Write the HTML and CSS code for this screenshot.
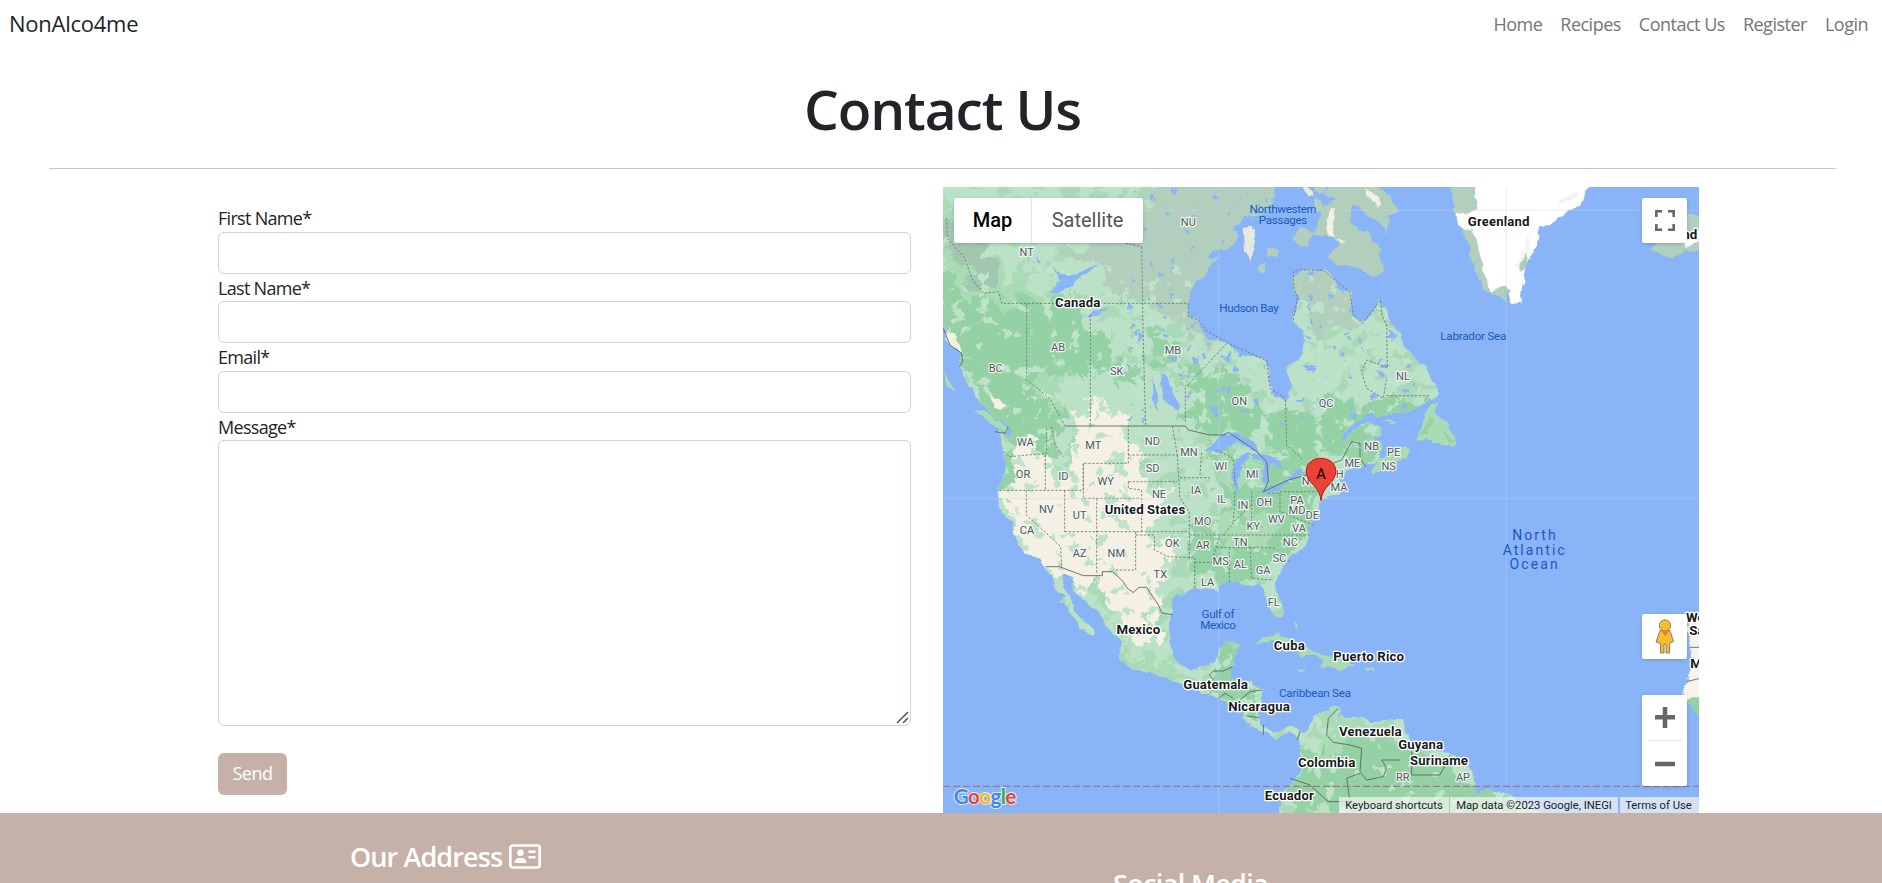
FILE: index.html
```html
<!DOCTYPE html>
<html lang="en">
<head>
<meta charset="utf-8">
<title>Contact Us</title>
<link rel="stylesheet" href="styles.css">
</head>
<body>
<nav class="navbar">
  <a class="brand">NonAlco4me</a>
  <ul class="nav-links"><li>Home</li><li>Recipes</li><li>Contact Us</li><li>Register</li><li>Login</li></ul>
</nav>
<header class="page-head"><h1>Contact Us</h1></header>
<main class="contact">
  <form class="form">
    <label>First Name*</label><input type="text" class="control">
    <label>Last Name*</label><input type="text" class="control">
    <label>Email*</label><input type="text" class="control">
    <label>Message*</label>
    <div class="message-wrap"><textarea class="control message"></textarea>
      <svg class="grip" width="13" height="13" viewBox="0 0 13 13"><path d="M1 12L12 1M7 12L12 7" stroke="#555" stroke-width="1.500"/></svg>
    </div>
    <button type="button" class="send">Send</button>
  </form>
  <section class="map">
    <svg class="tiles" viewBox="9 6 2268 1878" width="756" height="626">
      <defs>
        <filter id="coast" x="0" y="0" width="100%" height="100%" color-interpolation-filters="sRGB">
          <feTurbulence type="fractalNoise" baseFrequency=".02" numOctaves="4" seed="4" result="n"/>
          <feDisplacementMap in="SourceGraphic" in2="n" scale="30" xChannelSelector="R" yChannelSelector="G"/>
        </filter>
        <filter id="rough" x="-10%" y="-10%" width="120%" height="120%" color-interpolation-filters="sRGB">
          <feTurbulence type="fractalNoise" baseFrequency=".018" numOctaves="4" seed="9" result="n"/>
          <feDisplacementMap in="SourceGraphic" in2="n" scale="130" xChannelSelector="R" yChannelSelector="G"/>
        </filter>
        <filter id="speckGreen" x="0" y="0" width="100%" height="100%" color-interpolation-filters="sRGB">
          <feTurbulence type="fractalNoise" baseFrequency=".016 .022" numOctaves="4" seed="21"/>
          <feColorMatrix values="0 0 0 0 .64  0 0 0 0 .84  0 0 0 0 .70  22 0 0 0 -12.4"/>
        </filter>
        <filter id="speckPale" x="0" y="0" width="100%" height="100%" color-interpolation-filters="sRGB">
          <feTurbulence type="fractalNoise" baseFrequency=".026" numOctaves="3" seed="33"/>
          <feColorMatrix values="0 0 0 0 .75  0 0 0 0 .89  0 0 0 0 .79  24 0 0 0 -15.4"/>
        </filter>
        <filter id="speckWater" x="0" y="0" width="100%" height="100%" color-interpolation-filters="sRGB">
          <feTurbulence type="fractalNoise" baseFrequency=".032" numOctaves="3" seed="12"/>
          <feColorMatrix values="0 0 0 0 .54  0 0 0 0 .71  0 0 0 0 .97  30 0 0 0 -21.2"/>
        </filter>
        <path id="continent" d="M-30-30V430L9 430 30 480 70 500 60 540 85 590 110 640 150 680 200 725 215 760 180 740 187 800 200 830 180 910 178 945 190 990 215 1010 225 1060 250 1100 300 1120 318 1145 335 1175 345 1210 375 1240 358 1250 385 1275 410 1305 415 1335 440 1345 460 1352 458 1335 430 1310 405 1270 385 1235 362 1190 362 1165 393 1175 400 1215 430 1240 470 1275 510 1330 540 1370 545 1420 575 1450 650 1475 720 1500 800 1525 850 1545 880 1555 915 1600 920 1615 970 1640 1010 1665 1030 1645 1065 1645 1085 1670 1080 1720 1085 1760 1050 1800 1030 1830 1010 1910H1850L1770 1860 1690 1830 1640 1818 1600 1830 1605 1795 1600 1775 1575 1725 1525 1700 1440 1695 1410 1670 1385 1605 1280 1605 1200 1585 1190 1600 1180 1620 1195 1570 1160 1575 1115 1605 1085 1645 1065 1625 1030 1630 1000 1640 970 1625 955 1600 960 1540 965 1515 930 1490 870 1480 870 1450 885 1430 895 1385 870 1380 835 1390 825 1435 790 1445 750 1455 725 1440 700 1400 685 1370 688 1290 695 1250 740 1215 770 1205 830 1215 845 1195 900 1190 930 1205 960 1195 975 1225 985 1270 1010 1305 1025 1300 1025 1260 1003 1190 1020 1155 1060 1105 1105 1080 1110 1040 1095 1025 1115 1020 1140 985 1145 945 1200 930 1215 905 1200 880 1220 860 1275 835 1320 820 1325 770 1290 755 1325 745 1325 720 1290 715 1240 735 1205 780 1195 785 1215 745 1250 710 1290 690 1400 688 1440 660 1480 645 1490 640 1492 600 1470 575 1460 545 1425 520 1400 490 1380 460 1365 430 1345 400 1330 370 1320 345 1310 370 1290 400 1265 415 1240 390 1230 350 1230 320 1190 305 1180 280 1150 256 1075 256 1060 275 1062 320 1075 340 1072 370 1060 405 1090 440 1092 480 1075 525 1035 545 1055 600 1050 640 1030 655 1000 625 988 600 985 540 975 525 900 510 860 475 800 460 785 435 775 405 745 395 745 350 760 300 800 260 830 225 810 215 820 195 870 190 895 150 880 120 915 100 960 90 1000 50 1005-30Z"/>
        <clipPath id="landClip"><use href="#continent"/></clipPath>
      </defs>
      <rect width="2400" height="2000" fill="#8ab4f8"/>
      <g filter="url(#coast)">
        <use href="#continent" fill="#bbe2c6"/>
        <g clip-path="url(#landClip)">
          <rect width="1700" height="1884" filter="url(#speckGreen)" opacity=".75"/>
          <g filter="url(#rough)">
            <path fill="#b2cfbe" d="M340 190L520 170 600 110 640-40H1060V480H820L780 450 690 400 620 350 500 340 480 250ZM1040 240H1240V400L1180 430 1100 440Z"/>
            <path fill="#bbe2c6" d="M380 565L470 560 600 610 720 640 730 720 640 800 400 720 350 640Z"/>
            <path fill="#94d2a5" d="M-20 250L90 300 210 350 400 345 450 400 520 500 600 540 590 610 540 575 380 560 350 600 380 700 330 760 340 820 220 780 180 700 0 450ZM740 540L860 560 960 680 1120 690 1180 650 1300 660 1480 640 1480 700 1240 740 1150 830 1060 830 930 750 800 750 730 700ZM190 800L230 810 230 880 180 980ZM590 450H700L740 540 680 560Z"/>
            <path fill="#a9dbb5" d="M9 10L60 50 130 190 200 250 330 340 150 380 9 260ZM250 580L380 560 350 700Z"/>
            <path fill="#a0bfae" d="M9 130L60 150 160 210 190 300 130 310 90 260 9 200Z" opacity=".7"/>
            <path fill="#f5f0e4" d="M400 700L480 650 540 690 590 800 600 880 690 920 660 990 610 1030 670 1080 690 1150 620 1290 660 1370 620 1390 530 1290 440 1200 340 1170 230 1060 210 960 225 820 270 740 320 830 390 860 410 800Z"/>
            <path fill="#bbe2c6" d="M490 900L540 950 540 1040 500 990ZM345 840L390 850 370 910 340 880ZM440 1100L480 1130 460 1160ZM470 840L540 830 560 870 500 860Z"/>
            <path fill="#94d2a5" d="M800 770L930 820 1100 820 1140 960 1110 1060 1020 1120 980 1190 800 1190 750 1150 770 1000 850 950ZM830 1390H900L880 1470 960 1510 950 1600 890 1550 800 1500ZM1060 1700L1180 1680 1320 1640 1500 1700 1610 1800 1760 1884H1040ZM1190 700L1320 720 1310 820 1200 860Z"/>
            <path fill="#a9dbb5" d="M850 830H970V910H850ZM840 980L1030 1000 960 1080 840 1110ZM1130 1600L1210 1580 1200 1700 1130 1740ZM320 1230L420 1290 410 1320ZM440 1190L510 1230 570 1400 700 1440 650 1470 540 1380Z"/>
          </g>
          <rect x="0" y="240" width="1700" height="1644" filter="url(#speckPale)"/>
          <rect x="560" width="950" height="720" filter="url(#speckWater)"/>
        </g>
        <g fill="#b2cfbe">
          <path d="M1165-20H1290L1380 70 1350 90 1340 145 1310 110 1270 80 1240 60 1230 100 1260 130 1290 150 1325 195 1325 260 1290 280 1240 240 1190 240 1165 210 1195 190 1180 160 1120 145 1140 90 1130 60 1160 20ZM1070 130L1120 140 1110 185 1060 170ZM980 190L1015 200 1010 215 985 208ZM955 240L985 238 975 265 955 262Z"/>
          <path d="M910 130L935 125 945 160 935 230 915 200ZM1080-10L1120 20 1100 40Z" fill="#e6eadd"/>
          <path d="M1120-10H1160L1145 60 1125 90Z"/>
          <path d="M1535-10H1620L1690 330 1700 355 1660 325 1630 320 1600 240 1590 180 1565 130 1540 80Z"/>
          <path d="M2120 110L2250 80 2290 100V185L2200 218 2130 195 2150 170Z"/>
        </g>
        <path fill="#fff" d="M1610-10H1958L1920 50 1840 110 1800 125 1790 180 1760 240 1750 300 1745 355 1715 350 1685 310 1650 320 1625 250 1607 180 1597 130 1555 120 1550 90 1615 80Z"/>
        <path fill="#f1f3f4" d="M1725 240L1770 150 1775 200 1745 250ZM1850 60L1920 15 1900 45Z"/>
        <path fill="#a9cdb6" d="M1738 240L1762 200 1766 235 1745 262ZM1675 318L1695 305 1706 318 1700 330Z"/>
        <path fill="#fff" d="M2215 165L2290 130V160L2240 195Z"/>
        <path fill="#f5f0e4" d="M1175 60L1190 95 1180 160 1155 145ZM1190 165L1215 175 1195 180ZM1265 10L1310 30 1315 60 1280 35ZM150 630L180 640 200 670 165 670ZM300 610L340 640 320 640ZM10 440L50 450 75 500 30 480Z"/>
        <g fill="#a9dbb5">
          <path d="M1425 760L1445 720 1470 660 1495 648 1485 690 1530 710 1550 770 1540 790 1500 770 1430 762ZM1295 860L1310 820 1355 810 1400 785 1410 800 1350 850 1305 872ZM1330 698L1375 718 1350 716ZM100 670L150 685 205 740 180 740 130 705ZM9 560L30 590 45 625 20 610Z"/>
          <path d="M940 1375L965 1355 1010 1350 1050 1365 1100 1385 1140 1410 1080 1415 1060 1390 1000 1366ZM1065 1447L1100 1450 1085 1458ZM1110 1395L1150 1415 1250 1440 1195 1455 1140 1447 1150 1430ZM1272 1448H1302V1457H1272ZM1060 1310L1072 1325 1070 1335Z"/>
        </g>
        <path fill="#94d2a5" d="M1440 745L1470 700 1480 715 1455 752ZM1520 735L1545 770 1530 775Z"/>
        <path fill="#f8f3eb" d="M2300 1270L2255 1300 2245 1360 2255 1420 2250 1480 2235 1510 2240 1545H2300Z"/>
        <path fill="#94d2a5" d="M2240 1543H2300V1605L2260 1575Z"/>
        <g fill="#8ab4f8">
          <path d="M338 248L370 272 405 275 435 250 470 245 430 270 400 300 350 318 320 315 365 290ZM440 400L460 370 500 380 465 390ZM660 570L685 585 710 640 715 680 700 680 670 640ZM632 585L650 620 655 680 635 640ZM595 440L610 450 600 480ZM575 410L590 425 578 430ZM288 208L312 228 300 232Z"/>
          <path d="M790 795L850 745 890 742 930 765 965 805 930 800 895 775 840 800ZM890 920L880 860 900 815 935 808 905 840ZM925 815L975 805 1020 830 1025 850 990 840 985 895 965 880 970 835ZM965 920L1045 880 1045 895 990 925ZM1040 870L1090 858 1100 870 1050 885Z"/>
          <path d="M200 725L215 735 210 760ZM1100 540L1130 550 1120 570ZM1310 560L1345 570 1320 575ZM1130 640L1150 645 1140 665ZM1100 6L1190 50 1150 60Z"/>
        </g>
      </g>
      <g class="borders">
        <path d="M20 100L22 160 75 220 95 280 130 325 175 320 185 355H745M260 355V585L330 640 375 723M451 390V723M605 185L610 480 617 723M545 172L605 185M736 710V608L860 475M745 355V395L775 405 800 437 860 472 980 527 990 610 1036 640 1040 780 1090 825M1060 405L1072 340 1060 300V262L1075 254 1150 256 1230 322 1240 390 1267 415 1322 345 1325 390 1340 420 1342 548 1280 525 1265 560 1280 610 1330 640 1340 577M1340 632H1470M190 800L210 815 320 805V725M335 725L345 780 370 815M316 810V916M178 916H430V835H565V723M565 810H712L697 723M565 890H712M430 835V940H600M565 890V910L605 915V1040M259 916V990L362 1085 365 1145M374 916V1040M374 1040H748M470 940V1165M587 1040V1155H520M587 1050H643V1095L685 1115 760 1118M712 810L720 940 748 980V1120M720 878H810M780 870L785 800M748 1050H850L890 1000 935 960M764 1118V1210M764 1132H815L840 1048M868 1088V1195M830 1088H1000M930 1088L935 1180 1000 1185M850 1050H1110M935 920V1020M885 920L880 1010M830 795L880 820 885 900M985 925H1020V980L1120 1020M1020 920H1130M1000 1088L1050 1130"/>
        <path class="national" d="M10 430L30 480 65 505 68 530 58 545M165 740L195 745 205 725M375 723H736L745 735 810 750 850 750 865 742 915 775 950 800 980 830 985 890 970 920 1045 885 1100 870M1178 835L1205 825 1235 770 1260 775V820L1278 845M318 1145L358 1145 430 1172H487V1160H518L550 1190 560 1208 580 1223 597 1207H620L655 1260 665 1283 698 1290M878 1445L850 1458H820L808 1470 835 1500M835 1540L855 1525 880 1540M965 1515L930 1520 900 1545M920 1593L955 1598M970 1620V1650M1080 1640L1072 1665M1195 1570L1165 1600 1160 1650 1180 1672 1230 1680 1265 1690 1260 1760 1280 1785 1330 1775 1340 1750 1325 1725 1380 1725M1260 1765L1220 1780 1230 1850 1165 1850 1110 1800 1050 1780M1415 1700V1770H1500L1530 1710M2250 1387H2280M2240 1490L2280 1480"/>
      </g>
      <path class="grid" d="M836 6V1884M1699 6V1884M9 76H2277M9 941H2277"/>
      <path class="equator" d="M9 1804H2277"/>
      <g class="state">
        <text x="745" y="123">NU</text><text x="260" y="213">NT</text><text x="354" y="499">AB</text><text x="167" y="560">BC</text><text x="530" y="570">SK</text><text x="699" y="507">MB</text><text x="898" y="659">ON</text><text x="1158" y="666">QC</text><text x="1389" y="584">NL</text><text x="256" y="784">WA</text><text x="460" y="793">MT</text><text x="637" y="780">ND</text><text x="747" y="814">MN</text><text x="638" y="860">SD</text><text x="843" y="855">WI</text><text x="937" y="880">MI</text><text x="249" y="880">OR</text><text x="370" y="886">ID</text><text x="497" y="900">WY</text><text x="657" y="939">NE</text><text x="768" y="928">IA</text><text x="845" y="954">IL</text><text x="909" y="973">IN</text><text x="973" y="963">OH</text><text x="1071" y="956">PA</text><text x="1107" y="901">NY</text><text x="1187" y="880">NH</text><text x="1197" y="918">MA</text><text x="1237" y="846">ME</text><text x="1295" y="794">NB</text><text x="1361" y="814">PE</text><text x="1346" y="854">NS</text><text x="319" y="983">NV</text><text x="419" y="1001">UT</text><text x="261" y="1046">CA</text><text x="419" y="1115">AZ</text><text x="529" y="1115">NM</text><text x="661" y="1179">TX</text><text x="697" y="1086">OK</text><text x="788" y="1020">MO</text><text x="788" y="1091">AR</text><text x="803" y="1204">LA</text><text x="842" y="1139">MS</text><text x="901" y="1150">AL</text><text x="969" y="1167">GA</text><text x="1019" y="1131">SC</text><text x="1051" y="1084">NC</text><text x="901" y="1082">TN</text><text x="940" y="1034">KY</text><text x="1009" y="1015">WV</text><text x="1077" y="1042">VA</text><text x="1071" y="986">MD</text><text x="1117" y="1001">DE</text><text x="1001" y="1262">FL</text><text x="1388" y="1787">RR</text><text x="1569" y="1788">AP</text>
      </g>
      <g class="country">
        <text x="413" y="366" textLength="136">Canada</text><text x="1676" y="123" textLength="185">Greenland</text><text x="2272" y="163" class="end">nd</text><text x="615" y="986" textLength="242">United States</text><text x="595" y="1346" textLength="131">Mexico</text><text x="1048" y="1395" textLength="93">Cuba</text><text x="1286" y="1428" textLength="212">Puerto Rico</text><text x="827" y="1511" textLength="194">Guatemala</text><text x="957" y="1579" textLength="185">Nicaragua</text><text x="1291" y="1653" textLength="188">Venezuela</text><text x="1442" y="1693" textLength="135">Guyana</text><text x="1497" y="1740" textLength="174">Suriname</text><text x="1160" y="1746" textLength="172">Colombia</text><text x="1048" y="1845" textLength="147">Ecuador</text><text x="2238" y="1310" class="start">We</text><text x="2248" y="1350" class="start">Sa</text><text x="2251" y="1449" class="start">M</text>
      </g>
      <g class="water">
        <text x="1029" y="83" textLength="201">Northwestern</text><text x="1029" y="116" textLength="146">Passages</text><text x="927" y="380" textLength="178">Hudson Bay</text><text x="1600" y="466" textLength="198">Labrador Sea</text><text x="834" y="1299" textLength="99">Gulf of</text><text x="834" y="1332" textLength="107">Mexico</text><text x="1125" y="1536" textLength="216">Caribbean Sea</text>
        <g class="ocean"><text x="1782" y="1065" textLength="130">North</text><text x="1781" y="1109" textLength="186">Atlantic</text><text x="1781" y="1152" textLength="145">Ocean</text></g>
      </g>
      <path d="M1143 946C1139 915 1125 907 1110 889 1085 856 1104 820 1143 820S1201 856 1176 889C1161 907 1147 915 1143 946Z" fill="#ea4335" stroke="#b31412" stroke-width="3"/>
      <text x="1143" y="881" class="pin">A</text>
      <text class="google" x="41" y="1857" textLength="188"><tspan fill="#4285f4">G</tspan><tspan fill="#ea4335">o</tspan><tspan fill="#fbbc04">o</tspan><tspan fill="#4285f4">g</tspan><tspan fill="#34a853">l</tspan><tspan fill="#ea4335">e</tspan></text>
    </svg>
    <div class="map-type"><span class="on">Map</span><span>Satellite</span></div>
    <div class="ctl full"><svg width="20" height="21" viewBox="0 0 20 21" fill="none" stroke="#666" stroke-width="2.6"><path d="M1.3 7V1.3H7M13 1.3h5.7V7M18.7 14v5.7H13M7 19.700H1.3V14"/></svg></div>
    <div class="ctl peg"><svg width="20" height="35" viewBox="0 0 20 35"><path d="M5 11.500h10l3.500 11-3 1.500-1 .500V34H11V25H9v9H5.500V24.500L1 23Z" fill="#fbbc2c" stroke="#777" stroke-width=".9" stroke-linejoin="round"/><circle cx="10" cy="6.500" r="5.700" fill="#fbbc2c" stroke="#777" stroke-width=".9"/><path d="M6.500 12h7.500l-3.800 5.500Z" fill="#e8822a"/></svg></div>
    <div class="ctl zoom"><svg width="45" height="91" viewBox="0 0 45 91"><path d="M13 22.300H33M23 12V33M13 69H33" stroke="#666" stroke-width="4.500"/><path d="M6 45.500H40" stroke="#e6e6e6"/></svg></div>
    <div class="legal"><span class="l1">Keyboard shortcuts</span><span class="l2">Map data ©2023 Google, INEGI</span><span class="l3">Terms of Use</span></div>
  </section>
</main>
<footer class="footer">
  <h4 class="address"><span>Our Address</span>
    <svg width="32" height="25" viewBox="0 0 32 25"><rect x="1.300" y="1.500" width="29.400" height="22" rx="2.500" fill="none" stroke="#fff" stroke-width="2.600"/><circle cx="11.500" cy="8.800" r="3.300" fill="#fff"/><path d="M5.500 19c0-3 2-5 4.500-5h3c2.500 0 4.500 2 4.500 5ZM19.500 6.500h7v2.400h-7ZM19.500 12h7v2.400h-7Z" fill="#fff"/></svg>
  </h4>
  <h4 class="social">Social Media</h4>
</footer>
</body>
</html>
```

FILE: styles.css
```css
* { box-sizing: border-box; }
html, body { height: 100%; }
body { margin: 0; overflow: hidden; background: #fff; color: #212529; font: 18px/27.6px "Open Sans", sans-serif; letter-spacing: -.7px; display: flex; flex-direction: column; }
.navbar { flex: none; height: 48px; padding: 0 14px 0 9px; display: flex; align-items: center; justify-content: space-between; }
.brand { font-size: 22px; letter-spacing: -.25px; }
.nav-links { display: flex; gap: 18px; margin: 0; padding: 1px 0 0; list-style: none; color: #757575; letter-spacing: -.5px; }
.page-head { flex: none; height: 121px; margin: 0 46px 0 49px; border-bottom: 1px solid #c5c6c8; display: flex; justify-content: center; }
h1 { margin: 25px 0 0; font-size: 55px; line-height: 72px; font-weight: 600; letter-spacing: -1.1px; }
.contact { flex: none; height: 644px; padding: 18px 183px 0 218px; display: flex; justify-content: space-between; }
.form { width: 693px; padding-top: 17px; display: flex; flex-direction: column; }
.form label { height: 27.500px; flex: none; padding-top: 1px; }
.control { width: 100%; height: 42px; flex: none; border: 1px solid #ced4da; border-radius: 6px; padding: 6px 12px; background: #fff; }
.message-wrap { position: relative; height: 286px; flex: none; }
.message { display: block; height: 286px; resize: none; }
.grip { position: absolute; right: 2px; bottom: 2px; }
.send { width: 69px; height: 42px; margin-top: 27px; border: 0; border-radius: 6px; background: #c6b1a8; color: #fff; font: inherit; letter-spacing: -.5px; }
.map { position: relative; width: 756px; height: 626px; overflow: hidden; font-family: Roboto, sans-serif; letter-spacing: 0; }
.tiles { display: block; }
.borders { fill: none; stroke: #66786e; stroke-width: 2.600; stroke-dasharray: 7 5; }
.national { stroke: #59645e; stroke-dasharray: none; }
.grid { fill: none; stroke: #c5d2ee; stroke-opacity: .4; stroke-width: 3; }
.equator { fill: none; stroke: #a47591; stroke-width: 4; stroke-dasharray: 21 9; }
.tiles text { text-anchor: middle; font-family: Roboto, sans-serif; }
.state text { font-size: 33px; fill: #50575b; stroke: #f1f7f2; stroke-width: 7; paint-order: stroke; stroke-linejoin: round; }
.country text { font-size: 40px; font-weight: 700; fill: #16181a; stroke: #fff; stroke-width: 8; paint-order: stroke; stroke-linejoin: round; }
.country .start { text-anchor: start; }
.country .end { text-anchor: end; }
.water text { font-size: 35px; fill: #185abc; }
.water .ocean text { font-size: 42px; }
.tiles .pin { font-size: 44px; fill: #000; }
.tiles .google { text-anchor: start; font-family: Lato, sans-serif; font-size: 62px; font-weight: 700; stroke: #dfeafd; stroke-width: 6; paint-order: stroke; }
.map-type { position: absolute; left: 11px; top: 11px; width: 189px; height: 45px; display: flex; background: #fff; border-radius: 2px; box-shadow: 0 1px 4px -1px rgba(0,0,0,.3); font-size: 20px; line-height: 45px; text-align: center; color: #565656; }
.map-type span { flex: 1; }
.map-type .on { flex: 0 0 78px; border-right: 1px solid #e6e6e6; color: #000; font-weight: 500; }
.ctl { position: absolute; right: 12px; width: 45px; height: 45px; display: flex; align-items: center; justify-content: center; background: #fff; border-radius: 2px; box-shadow: 0 1px 4px -1px rgba(0,0,0,.3); }
.full { top: 11px; }
.peg { top: 427px; }
.zoom { top: 508px; height: 91px; }
.legal { position: absolute; right: 0; bottom: 0; height: 16px; display: flex; font-size: 11.250px; line-height: 17px; color: #000; text-align: center; white-space: nowrap; }
.legal span { background: rgba(245,245,245,.7); color: #222; }
.l1 { width: 110px; margin-right: 1px; }
.l2 { width: 168px; margin-right: 2px; }
.legal .l3 { width: 79px; padding-right: 2px; }
.footer { flex: 1 0 auto; height: 70px; overflow: hidden; display: flex; align-items: flex-start; padding-left: 350px; background: #c6b1a8; color: #fff; }
.footer h4 { margin: 0; font-size: 27px; line-height: 33px; font-weight: 600; letter-spacing: -.65px; white-space: nowrap; }
.footer .address { width: 763px; padding-top: 27px; display: flex; gap: 7px; letter-spacing: -.9px; }
.address svg { margin-top: 4px; }
.social { padding-top: 54px; }
```
